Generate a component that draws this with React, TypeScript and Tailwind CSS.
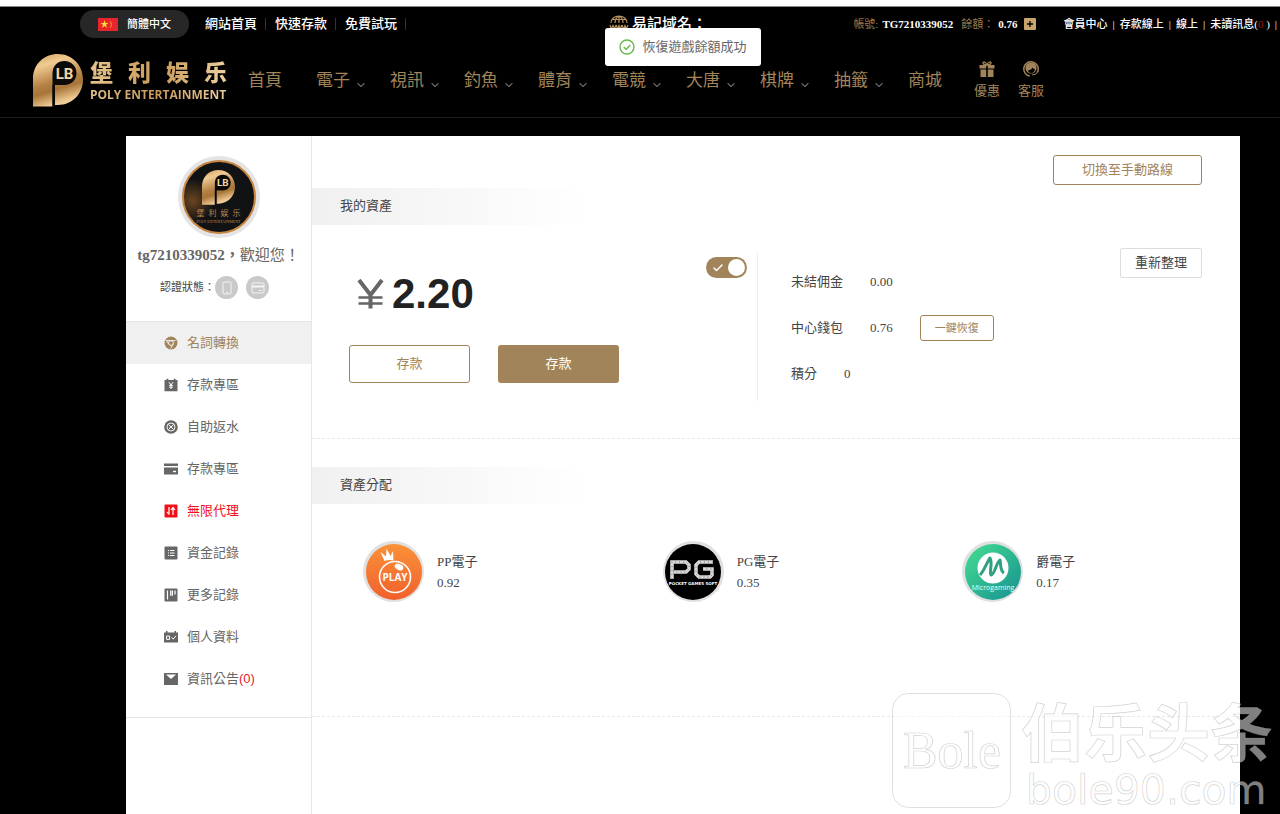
import { useState } from 'react'
import type { ReactNode } from 'react'
import { Check, ChevronDown } from 'lucide-react'

type MenuItem = { label: string; icon: ReactNode; tone?: 'active' | 'alert'; count?: number }

const NAV = ['電子', '視訊', '釣魚', '體育', '電競', '大唐', '棋牌', '抽籤']

const MENU: MenuItem[] = [
  {
    label: '名詞轉換',
    tone: 'active',
    icon: (
      <>
        <circle cx="7" cy="7" r="6.5" fill="currentColor" />
        <circle cx="7" cy="7" r="2.4" fill="none" stroke="#f0f0f0" />
        <path d="M2 4.6h9.5M4.8 8.2 2.2 4.6M9 8.4l-2.4 4" stroke="#f0f0f0" fill="none" />
      </>
    ),
  },
  {
    label: '存款專區',
    icon: (
      <>
        <path d="M.5 2h2V.8h1.8V2h5.4V.8h1.8V2h2v11.2H.5z" fill="currentColor" />
        <path d="m5 4.2 2 2.8 2-2.8M7 7v4M5.2 7.4h3.6M5.2 9.2h3.6" stroke="#fff" fill="none" />
      </>
    ),
  },
  {
    label: '自助返水',
    icon: (
      <>
        <circle cx="7" cy="7" r="6.8" fill="currentColor" />
        <circle cx="7" cy="7" r="4" fill="none" stroke="#fff" strokeWidth=".9" />
        <path d="m4.5 4.5 5 5M9.5 4.5l-5 5M5.6 7h2.8" stroke="#fff" strokeWidth=".9" />
      </>
    ),
  },
  {
    label: '存款專區',
    icon: (
      <>
        <path d="M0 1.5h14V4H0zM0 5.5h14v7H0z" fill="currentColor" />
        <path d="M9 9.5h3" stroke="#fff" strokeWidth="1.4" />
      </>
    ),
  },
  {
    label: '無限代理',
    tone: 'alert',
    icon: (
      <>
        <rect x=".5" y=".5" width="13" height="13" rx="1" fill="currentColor" />
        <path d="M5 3v7.5M3 8l2 2.5M9 11V3.5M7 6l2-2.5L11 6" stroke="#fff" strokeWidth="1.2" fill="none" />
      </>
    ),
  },
  {
    label: '資金記錄',
    icon: (
      <>
        <rect x=".5" y=".5" width="13" height="13" rx="1" fill="currentColor" />
        <path d="M4 4.5h1M6 4.5h4.5M4 7h1M6 7h4.5M4 9.5h1M6 9.5h4.5" stroke="#fff" />
      </>
    ),
  },
  {
    label: '更多記錄',
    icon: (
      <>
        <rect x=".5" y=".5" width="13" height="13" rx="1" fill="currentColor" />
        <path d="M3.5 2.5v9M6.7 2.5v5.2M8.4 2.5v5.2M11 2.5v4" stroke="#fff" strokeWidth="1.2" />
      </>
    ),
  },
  {
    label: '個人資料',
    icon: (
      <>
        <path d="M0 2.5h2V1h1.5v1.5h7V1H12v1.5h2v10H0z" fill="currentColor" />
        <path d="M2.6 6h3v3.4h-3zM7.6 7.4l1.6 1.8 2.8-3.4" stroke="#fff" fill="none" />
      </>
    ),
  },
  {
    label: '資訊公告',
    count: 0,
    icon: (
      <>
        <rect y="1" width="14" height="12" fill="currentColor" />
        <path d="M2 2.5h10L7 7z" fill="#fff" />
      </>
    ),
  },
]

function GoldMark({ id, className }: { id: string; className: string }) {
  return (
    <svg viewBox="0 0 50 53" className={className} aria-hidden="true">
      <defs>
        <linearGradient id={id} x1="0" y1="0" x2=".3" y2="1">
          <stop offset="0" stopColor="#d09c58" />
          <stop offset=".25" stopColor="#f0cb92" />
          <stop offset=".6" stopColor="#b58245" />
          <stop offset=".75" stopColor="#a87539" />
          <stop offset="1" stopColor="#f0cd96" />
        </linearGradient>
      </defs>
      <path d="M0 52.5V25C0 10 11 0 25 0s25 11 25 25.5S39 51 25 51h-3V31h-2.500v21.500z" fill={`url(#${id})`} />
      <path d="M19.500 53V20c0-9 5.500-13 12-13s12 5 12 12-5 12-12 12H22v22z" fill="#0b0a09" />
      <text x="31.5" y="24.500" textAnchor="middle" fontSize="15" fontWeight="700" fontFamily="Roboto, sans-serif" fill="#f3d6a6">
        LB
      </text>
    </svg>
  )
}

function Avatar() {
  return (
    <div className="flex size-[82px] items-center justify-center rounded-full bg-[#e4e4e4]">
      <div className="flex size-[74px] flex-col items-center justify-center rounded-full border-2 border-[#c88645] bg-[radial-gradient(circle_at_12%_55%,#6b4520,#111214_30%)]">
        <GoldMark id="gold-avatar" className="h-[35px] w-[33px]" />
        <div className="mt-1 flex gap-1 text-[8px] leading-[10px] text-[#b98950]">
          {['堡', '利', '娱', '乐'].map(c => (
            <span key={c}>{c}</span>
          ))}
        </div>
        <span className="text-[4px] leading-[5px] text-[#b98950]">POLY ENTERTAINMENT</span>
      </div>
    </div>
  )
}

function TopBar() {
  return (
    <div className="flex h-[34px] items-center pl-20 text-white">
      <button className="flex h-7 w-[109px] items-center justify-center gap-[9px] rounded-full bg-[#272727] text-[11px] font-medium">
        <svg viewBox="0 0 20 13" className="h-[13px] w-5" aria-hidden="true">
          <rect width="20" height="13" fill="#e8242c" />
          <path d="m6.5 2 1 3h3L8 6.8l1 3-2.5-1.9L4 9.8l1-3L2.5 5h3z" fill="#ffdc2e" />
          <path d="M12.5 3.5q2 3 0 6" stroke="#f7a02e" fill="none" />
        </svg>
        簡體中文
      </button>
      <div className="ml-4 flex items-center text-[13px] font-medium">
        {['網站首頁', '快速存款', '免費試玩'].map(t => (
          <a key={t} href="#" className="mr-[9px] border-r border-[#333] pr-2 leading-3">
            {t}
          </a>
        ))}
      </div>
      <div className="ml-[194px] flex items-center gap-[3px] text-[15px] font-medium">
        <svg viewBox="0 0 20 18" className="h-[18px] w-5" fill="none" stroke="#b8925c" strokeWidth="1.2" aria-hidden="true">
          <path d="M2 8a8 7 0 0 1 16 0M10 1v7M6 8q0-5 4-7 4 2 4 7M3.5 4.5h13" />
          <path d="m1 10 1.3 4L4 10.5 5.5 14 7 10M7.3 10l1.2 4 1.5-3.5 1.5 3.5 1.2-4M13 10l1.5 4 1.5-3.5 1.5 3.5 1.5-4" />
        </svg>
        易記域名：
      </div>
      <div className="ml-auto flex shrink-0 items-center text-[11px] font-bold whitespace-nowrap">
        <span className="mr-1 font-normal text-[#9c7a4c]">帳號:</span>
        <span className="mr-2">TG7210339052</span>
        <span className="mr-1 font-normal text-[#9c7a4c]">餘額：</span>
        <span>0.76</span>
        <button aria-label="存款" className="mr-7 ml-[6px] flex size-3 items-center justify-center rounded-[1px] bg-[#c8a36b]">
          <svg viewBox="0 0 8 8" className="size-2" aria-hidden="true">
            <path d="M4 1v6M1 4h6" stroke="#000" strokeWidth="1.3" />
          </svg>
        </button>
        <div className="flex gap-[5px] pr-[3px] font-medium">
          <a href="#">會員中心</a>
          <span>|</span>
          <a href="#">存款線上</a>
          <span>|</span>
          <a href="#">線上</a>
          <span>|</span>
          <a href="#">
            未讀訊息(<span className="text-[#a01818]">0</span> )
          </a>
          <span>|</span>
        </div>
      </div>
    </div>
  )
}

function Header() {
  return (
    <header className="flex h-[77px] items-center border-b border-[#1c1c1c] pt-[3px] pl-[33px] text-[#a1845a]">
      <a href="#" className="flex items-center gap-[7px]">
        <GoldMark id="gold-logo" className="h-[53px] w-[50px]" />
        <div className="w-[137px]">
          <div className="flex justify-between bg-linear-to-r from-[#e6c48c] via-[#c89a58] to-[#edd0a0] bg-clip-text text-[23px] leading-7 font-black text-transparent">
            {['堡', '利', '娱', '乐'].map(c => (
              <span key={c}>{c}</span>
            ))}
          </div>
          <div className="bg-linear-to-r from-[#e6c48c] via-[#c89a58] to-[#edd0a0] bg-clip-text font-['Open_Sans',sans-serif] text-xs leading-[14px] font-bold whitespace-nowrap text-transparent">
            POLY ENTERTAINMENT
          </div>
        </div>
      </a>
      <nav className="ml-[21px] flex items-center gap-6 text-[17px]">
        <a href="#" className="mr-[10px]">
          首頁
        </a>
        {NAV.map(t => (
          <a key={t} href="#" className="flex items-center gap-[6px]">
            {t}
            <ChevronDown className="mt-2 size-[10px] scale-125 text-[#777]" strokeWidth={2} />
          </a>
        ))}
        <a href="#">商城</a>
      </nav>
      <div className="ml-8 flex gap-[18px] text-[13px] leading-5">
        <a href="#" className="flex flex-col items-center gap-1">
          <svg viewBox="0 0 16 16" className="size-4" fill="currentColor" aria-hidden="true">
            <path d="M.5 4h6.7v3.5H.5zM8.800 4h6.700v3.500H8.800zM1.500 8.500h5.700V16H1.500zM8.800 8.500h5.700V16H8.800z" />
            <path d="M8 4C7 1 5 .5 4.2 1.5S5 4 8 4s4.600-1.500 3.800-2.500S9 1 8 4z" fill="none" stroke="currentColor" strokeWidth="1.3" />
          </svg>
          優惠
        </a>
        <a href="#" className="flex flex-col items-center gap-1">
          <svg viewBox="0 0 16 16" className="size-4" aria-hidden="true">
            <circle cx="8" cy="8" r="7.2" fill="none" stroke="currentColor" strokeWidth="1.5" strokeDasharray="36 9" transform="rotate(100 8 8)" />
            <circle cx="8" cy="7" r="5.6" fill="currentColor" />
            <path d="M5 9.500c2.500-.5 4-1.500 4.500-3 .8 1 1.500 1.500 2.500 2-.5 2.500-2 3.500-3.800 3.500S5.200 11 5 9.500z" fill="#000" />
            <path d="M15 10q-1 4-6 4" fill="none" stroke="currentColor" />
          </svg>
          客服
        </a>
      </div>
    </header>
  )
}

function Sidebar() {
  return (
    <aside className="w-[186px] shrink-0 border-r border-[#e8e8e8]">
      <div className="flex h-[186px] flex-col items-center border-b border-[#e5e5e5] pt-5">
        <Avatar />
        <p className="mt-[6px] text-[15px] leading-[22px] font-bold whitespace-nowrap text-[#666]">
          tg7210339052，<span className="font-normal">歡迎您！</span>
        </p>
        <div className="mt-[10px] mr-2 flex items-center text-[11px] text-[#444]">
          認證狀態：
          <span className="flex size-[23px] items-center justify-center rounded-full bg-[#c9c9c9]">
            <svg viewBox="0 0 12 14" className="h-[14px] w-3" fill="none" stroke="#f4f4f4" aria-hidden="true">
              <rect x="2" y="1" width="8" height="12" rx="1" />
              <path d="M5 11.5h2" />
            </svg>
          </span>
          <span className="ml-2 flex size-[23px] items-center justify-center rounded-full bg-[#c9c9c9]">
            <svg viewBox="0 0 14 12" className="h-3 w-[14px]" fill="none" stroke="#f4f4f4" aria-hidden="true">
              <rect x="1" y="1" width="12" height="10" rx="1" />
              <path d="M1 4.5h12" strokeWidth="2" />
              <path d="M8 8.5h3" />
            </svg>
          </span>
        </div>
      </div>
      <nav className="border-b border-[#e5e5e5] pb-[17px]">
        {MENU.map((m, i) => (
          <a
            key={i}
            href="#"
            className={`flex h-[42px] items-center gap-[9px] pl-[38px] text-[13px] ${
              m.tone === 'active' ? 'bg-[#f0f0f0] text-[#a1845a]' : m.tone === 'alert' ? 'text-[#f01018]' : 'text-[#666]'
            }`}
          >
            <svg viewBox="0 0 14 14" className="size-[14px]" aria-hidden="true">
              {m.icon}
            </svg>
            <span>
              {m.label}
              {m.count !== undefined && <span className="font-['Liberation_Sans',sans-serif] text-[#e8202c]">({m.count})</span>}
            </span>
          </a>
        ))}
      </nav>
    </aside>
  )
}

function SectionTitle({ children }: { children: ReactNode }) {
  return (
    <h2 className="flex h-[37px] w-[274px] items-center bg-linear-to-r from-[#f0f0f0] to-white pb-[2px] pl-7 text-[13px] text-[#444]">
      {children}
    </h2>
  )
}

function Assets() {
  const [visible, setVisible] = useState(true)

  return (
    <section className="border-b border-dashed border-[#e8e8e8] pb-[37px]">
      <div className="flex h-[52px] justify-end pt-[19px] pr-[38px]">
        <button className="h-[30px] w-[149px] shrink-0 rounded-[3px] border border-[#a1845a] text-[13px] text-[#a1845a]">
          切換至手動路線
        </button>
      </div>
      <SectionTitle>我的資產</SectionTitle>
      <div className="mt-[23px] flex">
        <div className="mt-[5px] flex h-[148px] w-[446px] shrink-0 flex-col border-r border-[#eee] pr-[10px] pl-[37px]">
          <div className="flex justify-between">
            <div className="mt-4 flex items-center pl-2">
              <svg viewBox="0 0 27 30" className="h-[30px] w-[27px]" fill="none" stroke="#666" strokeWidth="4" aria-hidden="true">
                <path d="m2 1 11.5 15L25 1M13.5 15v14.5" />
                <path d="M1.5 18.5h24M1.5 24.5h24" strokeWidth="2.5" />
              </svg>
              <span className="ml-2 font-['Liberation_Sans',sans-serif] text-[42px] leading-[50px] font-bold text-[#222]">
                {visible ? '2.20' : '****'}
              </span>
            </div>
            <label className="relative mt-1 flex h-[21px] w-[41px] items-center">
              <input
                type="checkbox"
                aria-label="顯示餘額"
                checked={visible}
                onChange={e => setVisible(e.target.checked)}
                className="peer h-[21px] w-[41px] appearance-none rounded-full bg-gray-300 checked:bg-[#a1845a]"
              />
              <Check className="pointer-events-none absolute left-[6px] size-3 text-white" strokeWidth={3} />
              <span className="pointer-events-none absolute left-[2px] size-[17px] rounded-full bg-white peer-checked:left-[22px]" />
            </label>
          </div>
          <div className="mt-[26px] flex gap-7">
            <button className="h-[38px] w-[121px] rounded-[3px] border border-[#a1845a] text-[13px] text-[#a1845a]">存款</button>
            <button className="h-[38px] w-[121px] rounded-[3px] bg-[#a1845a] text-[13px] text-white">存款</button>
          </div>
        </div>
        <dl className="mt-[14px] flex flex-col gap-[6px] pl-[33px] text-[13px] text-[#444]">
          <div className="flex h-10 items-center gap-[27px]">
            <dt>未結佣金</dt>
            <dd>0.00</dd>
          </div>
          <div className="flex h-10 items-center gap-[27px]">
            <dt>中心錢包</dt>
            <dd>0.76</dd>
            <dd>
              <button className="block h-[26px] w-[74px] rounded-[3px] border border-[#a1845a] text-[11px] text-[#a1845a]">一鍵恢復</button>
            </dd>
          </div>
          <div className="flex h-10 items-center gap-[27px]">
            <dt>積分</dt>
            <dd>0</dd>
          </div>
        </dl>
        <button className="mr-[38px] ml-auto h-[30px] w-[82px] shrink-0 rounded-[2px] border border-[#ddd] text-[13px] text-[#444]">
          重新整理
        </button>
      </div>
    </section>
  )
}

function PlayLogo() {
  return (
    <svg viewBox="0 0 56 56" className="size-14" aria-hidden="true">
      <defs>
        <linearGradient id="orange" x1="0" y1="0" x2="0" y2="1">
          <stop offset="0" stopColor="#fa9238" />
          <stop offset="1" stopColor="#f0602c" />
        </linearGradient>
      </defs>
      <circle cx="28" cy="28" r="28" fill="url(#orange)" />
      <path d="m18.5 17-4-9 5.5 4.5.5-8 4 7.500 2.500-5 .5 9.500q-5-1-9 .5z" fill="#fff" />
      <circle cx="29" cy="33" r="15.5" fill="none" stroke="#fff" strokeWidth="1.6" />
      <ellipse cx="33" cy="23" rx="4.5" ry="3" fill="#fff" transform="rotate(25 33 23)" />
      <text x="29" y="37" textAnchor="middle" fontSize="10" fontWeight="700" fontFamily="Open Sans, sans-serif" fill="#fff">
        PLAY
      </text>
    </svg>
  )
}

function PocketLogo() {
  return (
    <svg viewBox="0 0 56 56" className="size-14" aria-hidden="true">
      <circle cx="28" cy="28" r="28" fill="#000" />
      <g fill="none" strokeWidth="3.5" stroke="#d8d8d8">
        <path d="M7 35V18h14l3 3v4l-3 3H9M48 18H34l-3 3v9l3 3h11l2-2v-6h-9" />
        <path d="M7 35V18h14l3 3v4l-3 3H9M48 18H34l-3 3v9l3 3h11l2-2v-6h-9" stroke="#777" strokeWidth="1" strokeDasharray="1 3" />
      </g>
      <text x="28" y="41" textAnchor="middle" fontSize="4" fontWeight="700" fontFamily="DejaVu Sans, sans-serif" fill="#fff">
        POCKET GAMES SOFT
      </text>
    </svg>
  )
}

function MicroLogo() {
  return (
    <svg viewBox="0 0 56 56" className="size-14" aria-hidden="true">
      <defs>
        <linearGradient id="teal" x1="0" y1="0" x2="1" y2="1">
          <stop offset=".2" stopColor="#3ccf92" />
          <stop offset="1" stopColor="#168f91" />
        </linearGradient>
      </defs>
      <circle cx="28" cy="28" r="28" fill="url(#teal)" />
      <circle cx="28" cy="24" r="15.5" fill="#fff" />
      <path d="M15 31c4-4 7-13 10-17 3 5-1 14 1 17 4-1 5-12 9-15 1 5 0 11 4 13" fill="none" stroke="#2fa183" strokeWidth="3" strokeLinejoin="round" />
      <text x="28" y="46" textAnchor="middle" fontSize="7" fontFamily="Open Sans, sans-serif" fill="#e8fff6">
        Microgaming
      </text>
    </svg>
  )
}

const GAMES = [
  { name: 'PP電子', amount: '0.92', logo: <PlayLogo /> },
  { name: 'PG電子', amount: '0.35', logo: <PocketLogo /> },
  { name: '爵電子', amount: '0.17', logo: <MicroLogo /> },
]

function Distribution() {
  return (
    <section className="border-b border-dashed border-[#e8e8e8] pt-7 pb-[114px]">
      <SectionTitle>資產分配</SectionTitle>
      <ul className="mt-[37px] grid grid-cols-3 gap-[60px] pr-[38px] pl-[51px]">
        {GAMES.map(g => (
          <li key={g.name} className="flex items-center gap-[13px] text-[13px] leading-[21px] text-[#444]">
            <span className="flex size-[61px] shrink-0 items-center justify-center rounded-full bg-[#e0e0e0]">{g.logo}</span>
            <div>
              <p>{g.name}</p>
              <p>{g.amount}</p>
            </div>
          </li>
        ))}
      </ul>
    </section>
  )
}

function Toast() {
  return (
    <div role="status" className="absolute top-7 left-1/2 z-10 ml-[-35px] flex h-[38px] w-[156px] items-center justify-center gap-[7px] rounded-[3px] bg-white text-[13px] whitespace-nowrap text-[#666]">
      <svg viewBox="0 0 16 16" className="size-4" fill="none" stroke="#67b94a" strokeWidth="1.4" aria-hidden="true">
        <circle cx="8" cy="8" r="7" />
        <path d="m4.8 8 2.4 2.4 4-4.4" />
      </svg>
      恢復遊戲餘額成功
    </div>
  )
}

function Watermark() {
  return (
    <svg
      viewBox="0 0 388 124"
      className="pointer-events-none absolute right-0 bottom-0 h-[124px] w-[388px]"
      fill="#ffffff"
      fillOpacity=".5"
      stroke="#999999"
      strokeOpacity=".45"
      strokeWidth=".7"
      aria-hidden="true"
    >
      <rect x=".5" y="3.5" width="118" height="114" rx="16" />
      <text x="60" y="78" textAnchor="middle" fontSize="52" fontFamily="Liberation Serif, serif">
        Bole
      </text>
      <text x="129" y="66" fontSize="63" fontWeight="700" fontFamily="Noto Sans CJK SC, sans-serif">
        伯乐头条
      </text>
      <text x="134" y="114" fontSize="41" fontFamily="DejaVu Sans, sans-serif">
        bole90.com
      </text>
    </svg>
  )
}

export default function App() {
  return (
    <div className="relative flex min-h-screen flex-col overflow-hidden bg-black font-['Liberation_Serif','Noto_Sans_CJK_TC',serif]">
      <div className="h-[7px] border-b border-[#888] bg-white" />
      <TopBar />
      <Header />
      <main className="mt-[18px] mr-10 ml-[126px] flex grow bg-white">
        <Sidebar />
        <div className="min-w-0 grow">
          <Assets />
          <Distribution />
        </div>
      </main>
      <Toast />
      <Watermark />
    </div>
  )
}
